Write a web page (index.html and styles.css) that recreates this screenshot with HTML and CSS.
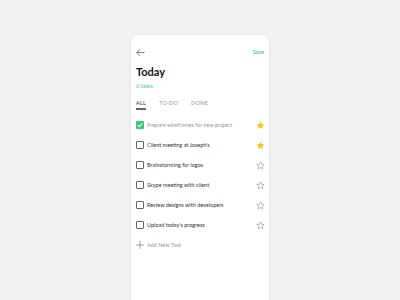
FILE: index.html
```html
<!DOCTYPE html>
<html>
<head>
<meta charset="utf-8">
<link rel="stylesheet" href="styles.css">
</head>
<body>
<div class="page">
  <div class="card">
    <div class="header">
      <svg class="back" width="9" height="9" viewBox="0 0 9 9"><path d="M8.5 4.5H0.8M4.3 1L0.8 4.5L4.3 8" fill="none" stroke="#666" stroke-width="0.8"/></svg>
      <span class="save">Save</span>
    </div>
    <h1 class="title">Today</h1>
    <div class="count">6 tasks</div>
    <div class="tabs">
      <span class="tab active">ALL</span>
      <span class="tab">TO-DO</span>
      <span class="tab">DONE</span>
    </div>
    <ul class="tasks">
      <li class="task done">
        <span class="box checked"><svg width="8" height="8" viewBox="0 0 8 8"><path d="M1.8 4.1L3.3 5.6L6.3 2.4" fill="none" stroke="#fff" stroke-width="1.1"/></svg></span>
        <span class="label">Prepare wireframes for new project</span>
        <svg class="star" width="9" height="9" viewBox="0 0 24 24"><path d="M12 1.5l3.1 6.6 7.2.9-5.3 5 1.4 7.1L12 17.6l-6.4 3.5 1.4-7.1-5.3-5 7.2-.9z" fill="#f7c21b"/></svg>
      </li>
      <li class="task">
        <span class="box"></span>
        <span class="label">Client meeting at Joseph's</span>
        <svg class="star" width="9" height="9" viewBox="0 0 24 24"><path d="M12 1.5l3.1 6.6 7.2.9-5.3 5 1.4 7.1L12 17.6l-6.4 3.5 1.4-7.1-5.3-5 7.2-.9z" fill="#f7c21b"/></svg>
      </li>
      <li class="task">
        <span class="box"></span>
        <span class="label">Brainstorming for logos</span>
        <svg class="star" width="9" height="9" viewBox="0 0 24 24"><path d="M12 2.5l2.9 6.2 6.8.8-5 4.7 1.3 6.7L12 17.6l-6 3.3 1.3-6.7-5-4.7 6.8-.8z" fill="none" stroke="#888" stroke-width="1.6" stroke-linejoin="round"/></svg>
      </li>
      <li class="task">
        <span class="box"></span>
        <span class="label">Skype meeting with client</span>
        <svg class="star" width="9" height="9" viewBox="0 0 24 24"><path d="M12 2.5l2.9 6.2 6.8.8-5 4.7 1.3 6.7L12 17.6l-6 3.3 1.3-6.7-5-4.7 6.8-.8z" fill="none" stroke="#888" stroke-width="1.6" stroke-linejoin="round"/></svg>
      </li>
      <li class="task">
        <span class="box"></span>
        <span class="label">Review designs with developers</span>
        <svg class="star" width="9" height="9" viewBox="0 0 24 24"><path d="M12 2.5l2.9 6.2 6.8.8-5 4.7 1.3 6.7L12 17.6l-6 3.3 1.3-6.7-5-4.7 6.8-.8z" fill="none" stroke="#888" stroke-width="1.6" stroke-linejoin="round"/></svg>
      </li>
      <li class="task">
        <span class="box"></span>
        <span class="label">Upload today's progress</span>
        <svg class="star" width="9" height="9" viewBox="0 0 24 24"><path d="M12 2.5l2.9 6.2 6.8.8-5 4.7 1.3 6.7L12 17.6l-6 3.3 1.3-6.7-5-4.7 6.8-.8z" fill="none" stroke="#888" stroke-width="1.6" stroke-linejoin="round"/></svg>
      </li>
      <li class="task add">
        <svg class="plus" width="8" height="8" viewBox="0 0 8 8"><path d="M4 0V8M0 4H8" stroke="#777" stroke-width="0.7"/></svg>
        <span class="label">Add New Task</span>
      </li>
    </ul>
  </div>
</div>
</body>
</html>
```

FILE: styles.css
```css
* { box-sizing: border-box; }
html, body { margin: 0; padding: 0; }
body {
  width: 400px;
  height: 300px;
  overflow: hidden;
  background: #f3f3f3;
  font-family: "Lato", "Open Sans", sans-serif;
  color: #333;
}
.page {
  display: flex;
  justify-content: center;
  padding-top: 35px;
}
.card {
  width: 138px;
  height: 280px;
  background: #fff;
  border-radius: 8px;
  box-shadow: 0 1px 5px rgba(0, 0, 0, 0.07);
  padding: 12px 6px 0 5px;
  display: flex;
  flex-direction: column;
}
.header {
  height: 10px;
  display: flex;
  justify-content: space-between;
  align-items: center;
}
.back { display: block; }
.save {
  font-size: 5.5px;
  color: #3dd17b;
  font-weight: 600;
  margin-right: -1px;
}
.title {
  margin: 8px 0 0;
  font-size: 11px;
  line-height: 14px;
  font-weight: 700;
  color: #111;
}
.count {
  margin-top: 3px;
  font-size: 5.5px;
  line-height: 8px;
  color: #3dd17b;
}
.tabs {
  margin-top: 9px;
  display: flex;
  gap: 13px;
}
.tab {
  font-size: 5.5px;
  line-height: 8px;
  color: #999;
  letter-spacing: 0.2px;
  position: relative;
}
.tab.active {
  color: #333;
}
.tab.active::after {
  content: "";
  position: absolute;
  left: 0;
  right: -0.5px;
  top: 9px;
  height: 2px;
  background: #666;
}
.tasks {
  list-style: none;
  margin: 8px 0 0;
  padding: 0;
}
.task {
  height: 20px;
  display: flex;
  align-items: center;
}
.box {
  width: 8px;
  height: 8px;
  border: 0.8px solid #666;
  border-radius: 1px;
  flex: none;
  display: flex;
}
.box.checked {
  border: none;
  background: #3ac66b;
}
.label {
  margin-left: 3px;
  font-size: 5.5px;
  color: #333;
  flex: 1;
  white-space: nowrap;
}
.task.done .label { color: #999; }
.star { flex: none; margin-right: -1.5px; }
.plus { flex: none; }
.task.add .label { color: #999; }
```
